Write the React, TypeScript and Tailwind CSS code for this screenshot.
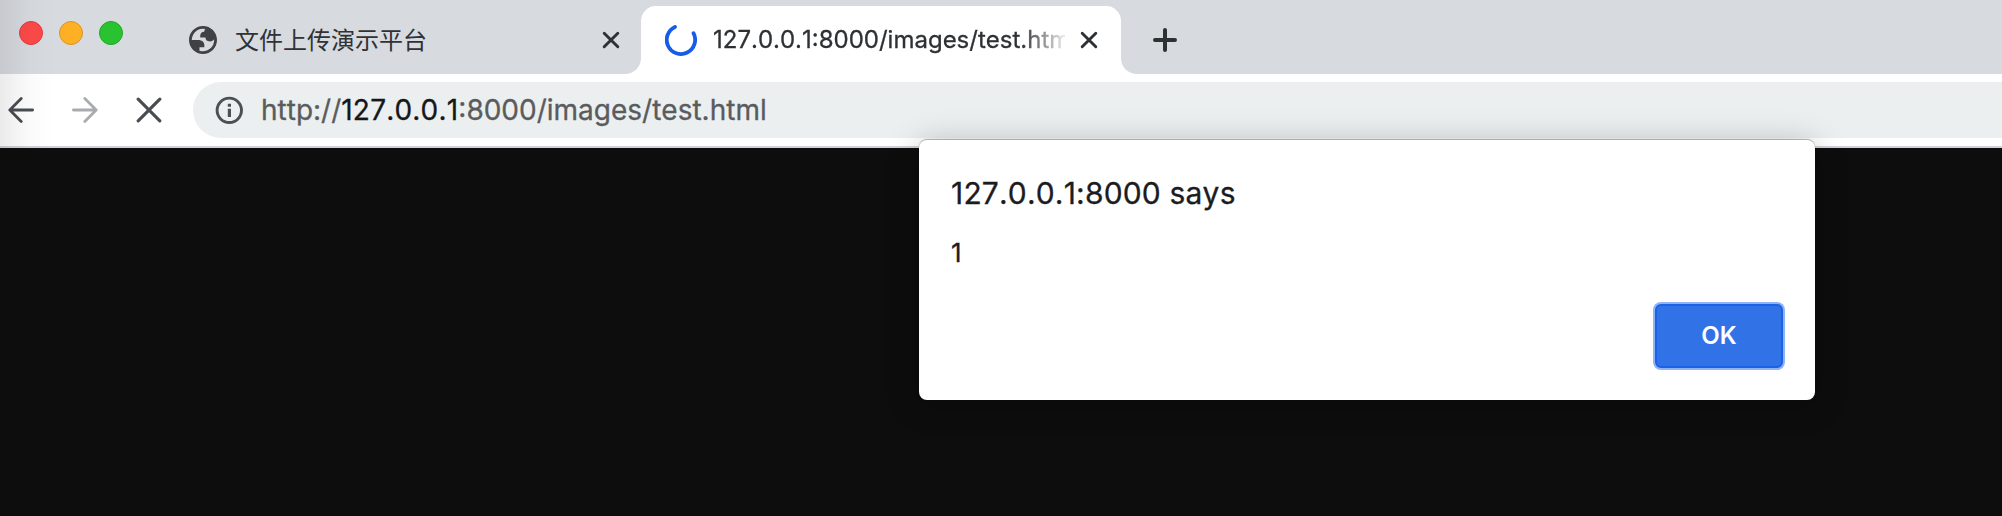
import type { ReactNode } from "react";

function Light({ className }: { className: string }) {
  return <span className={`size-6 shrink-0 rounded-full border ${className}`} />;
}

function Cross({ className, size, width, inset }: { className: string; size: number; width: number; inset: number }) {
  const a = inset;
  const b = size - inset;
  return (
    <svg className={`shrink-0 ${className}`} width={size} height={size} viewBox={`0 0 ${size} ${size}`} fill="none" stroke="currentColor" strokeWidth={width} strokeLinecap="round">
      <path d={`M${a} ${a}L${b} ${b}M${b} ${a}L${a} ${b}`} />
    </svg>
  );
}

function Arrow({ className }: { className: string }) {
  return (
    <svg className={`shrink-0 ${className}`} width="26" height="26" viewBox="0 0 26 26" fill="none" stroke="currentColor" strokeWidth="2.8" strokeLinecap="round" strokeLinejoin="round">
      <path d="M24.6 13H2M13.2 1.6L1.8 13l11.4 11.4" />
    </svg>
  );
}

function Globe() {
  return (
    <svg className="ml-[66px] size-7 shrink-0 text-[#404145]" viewBox="2 2 20 20" fill="currentColor" fillRule="evenodd">
      <path d="M12 2C6.48 2 2 6.48 2 12s4.48 10 10 10 10-4.48 10-10S17.52 2 12 2zM4 12h4.4c3.407.022 4.922 1.73 4.543 5.127H9.488v2.47a8.004 8.004 0 0 0 10.498-8.083C19.327 12.504 18.332 13 17 13c-2.137 0-3.206-.916-3.206-2.75h-3.748c-.274-2.728.683-4.092 2.87-4.092 0-.975.327-1.597.811-1.97A8.004 8.004 0 0 0 4 12z" />
    </svg>
  );
}

function TabStrip({ children }: { children: ReactNode }) {
  return <div className="flex h-[74px] bg-[#d7dadf] pl-[19px]">{children}</div>;
}

export default function App() {
  return (
    <div className="relative flex h-[516px] w-[2002px] flex-col overflow-hidden bg-[#0d0d0d] font-['Inter','Noto_Sans_CJK_SC',sans-serif] font-normal [font-kerning:none]">
      <TabStrip>
        <div className="mt-[21px] flex gap-4">
          <Light className="border-[#e2383c] bg-[#fc4948]" />
          <Light className="border-[#dc9424] bg-[#fdb024]" />
          <Light className="border-[#1fa827] bg-[#29c231]" />
        </div>
        <div className="flex h-[74px] w-[518px] items-center pt-[6px]">
          <Globe />
          <span className="-mt-[3px] ml-[18px] whitespace-nowrap font-['Noto_Sans_CJK_SC',sans-serif] text-2xl font-normal text-[#303235]">文件上传演示平台</span>
          <Cross className="ml-auto mr-[21px] text-[#2e3134]" size={18} width={2.9} inset={2.2} />
        </div>
        <div className="relative mt-[6px] flex h-[68px] w-[480px] items-center rounded-t-[15px] bg-white pl-[24px]">
          <svg className="absolute -left-4 bottom-0 size-4 text-white" viewBox="0 0 16 16" fill="currentColor">
            <path d="M16 0v16H0C9 16 16 9 16 0z" />
          </svg>
          <svg className="absolute -right-4 bottom-0 size-4 text-white" viewBox="0 0 16 16" fill="currentColor">
            <path d="M0 0v16h16C7 16 0 9 0 0z" />
          </svg>
          <svg className="size-8 shrink-0 text-[#175ce6]" viewBox="0 0 32 32" fill="none" stroke="currentColor" strokeWidth="3.8" strokeLinecap="round">
            <path d="M10 2.9A14.2 14.2 0 1 0 28.5 9.2" />
          </svg>
          <span className="ml-[16px] w-[352px] shrink-0 overflow-hidden whitespace-nowrap text-[24px] leading-[34px] text-[#2e3134] [mask-image:linear-gradient(to_right,black_308px,transparent_356px)] [-webkit-text-stroke:0.3px_currentColor]">
            127.0.0.1:8000/images/test.html
          </span>
          <Cross className="ml-[15px] text-[#2e3134]" size={18} width={2.9} inset={2.2} />
        </div>
        <svg className="ml-[32px] mt-7 size-6 text-[#2e3134]" viewBox="0 0 24 24" fill="none" stroke="currentColor" strokeWidth="4" strokeLinecap="round">
          <path d="M12 2v20M2 12h20" />
        </svg>
      </TabStrip>

      <div className="flex h-[74px] border-b-2 border-[#cfd3d7] bg-white pl-2 pt-2">
        <div className="flex h-14 w-[185px] items-center">
          <Arrow className="text-[#494c51]" />
          <Arrow className="ml-[38px] rotate-180 text-[#a9abaf]" />
          <Cross className="ml-[38px] text-[#494c51]" size={26} width={3.2} inset={2.2} />
        </div>
        <div className="flex h-14 flex-1 items-center rounded-l-full bg-[#ebeff0] pl-[22px]">
          <svg className="size-7 shrink-0 text-[#4c4f54]" viewBox="0 0 28 28" fill="none" stroke="currentColor" strokeWidth="2.9">
            <circle cx="14.3" cy="14.3" r="12.2" />
            <path d="M14.4 12.7v8.3M14.4 7.8v3" strokeWidth="3.2" />
          </svg>
          <span className="ml-[18px] whitespace-nowrap text-[28px] leading-9 text-[#5a5b5d] [-webkit-text-stroke:0.3px_currentColor]">
            http://<span className="tracking-[0.2px] text-[#15171a]">127.0.0.1</span>:8000/images/test.html
          </span>
        </div>
      </div>

      <div className="pointer-events-none absolute left-0 top-0 h-[148px] w-[56px] bg-linear-to-r from-black/8 via-black/2 to-transparent" />

      <div className="absolute left-[919px] top-[140px] flex h-[260px] w-[896px] flex-col rounded-lg bg-white px-8 shadow-[0_-1px_1px_rgba(0,0,0,0.28),0_4px_32px_rgba(0,0,0,0.26)]">
        <h1 className="mt-[35px] whitespace-nowrap text-[30px] leading-9 tracking-[0.18px] text-[#1b1c1f] [-webkit-text-stroke:0.3px_currentColor]">127.0.0.1:8000 says</h1>
        <p className="mt-[26px] text-[26px] leading-8 text-[#1b1c1f] [-webkit-text-stroke:0.3px_currentColor]">1</p>
        <button className="ml-auto mt-[35px] flex h-16 w-32 shrink-0 items-center justify-center rounded-md border-2 border-[#1b62e6] bg-[#3173e6] text-2xl font-semibold text-white ring-2 ring-[#8fb3f6]">
          OK
        </button>
      </div>
    </div>
  );
}
